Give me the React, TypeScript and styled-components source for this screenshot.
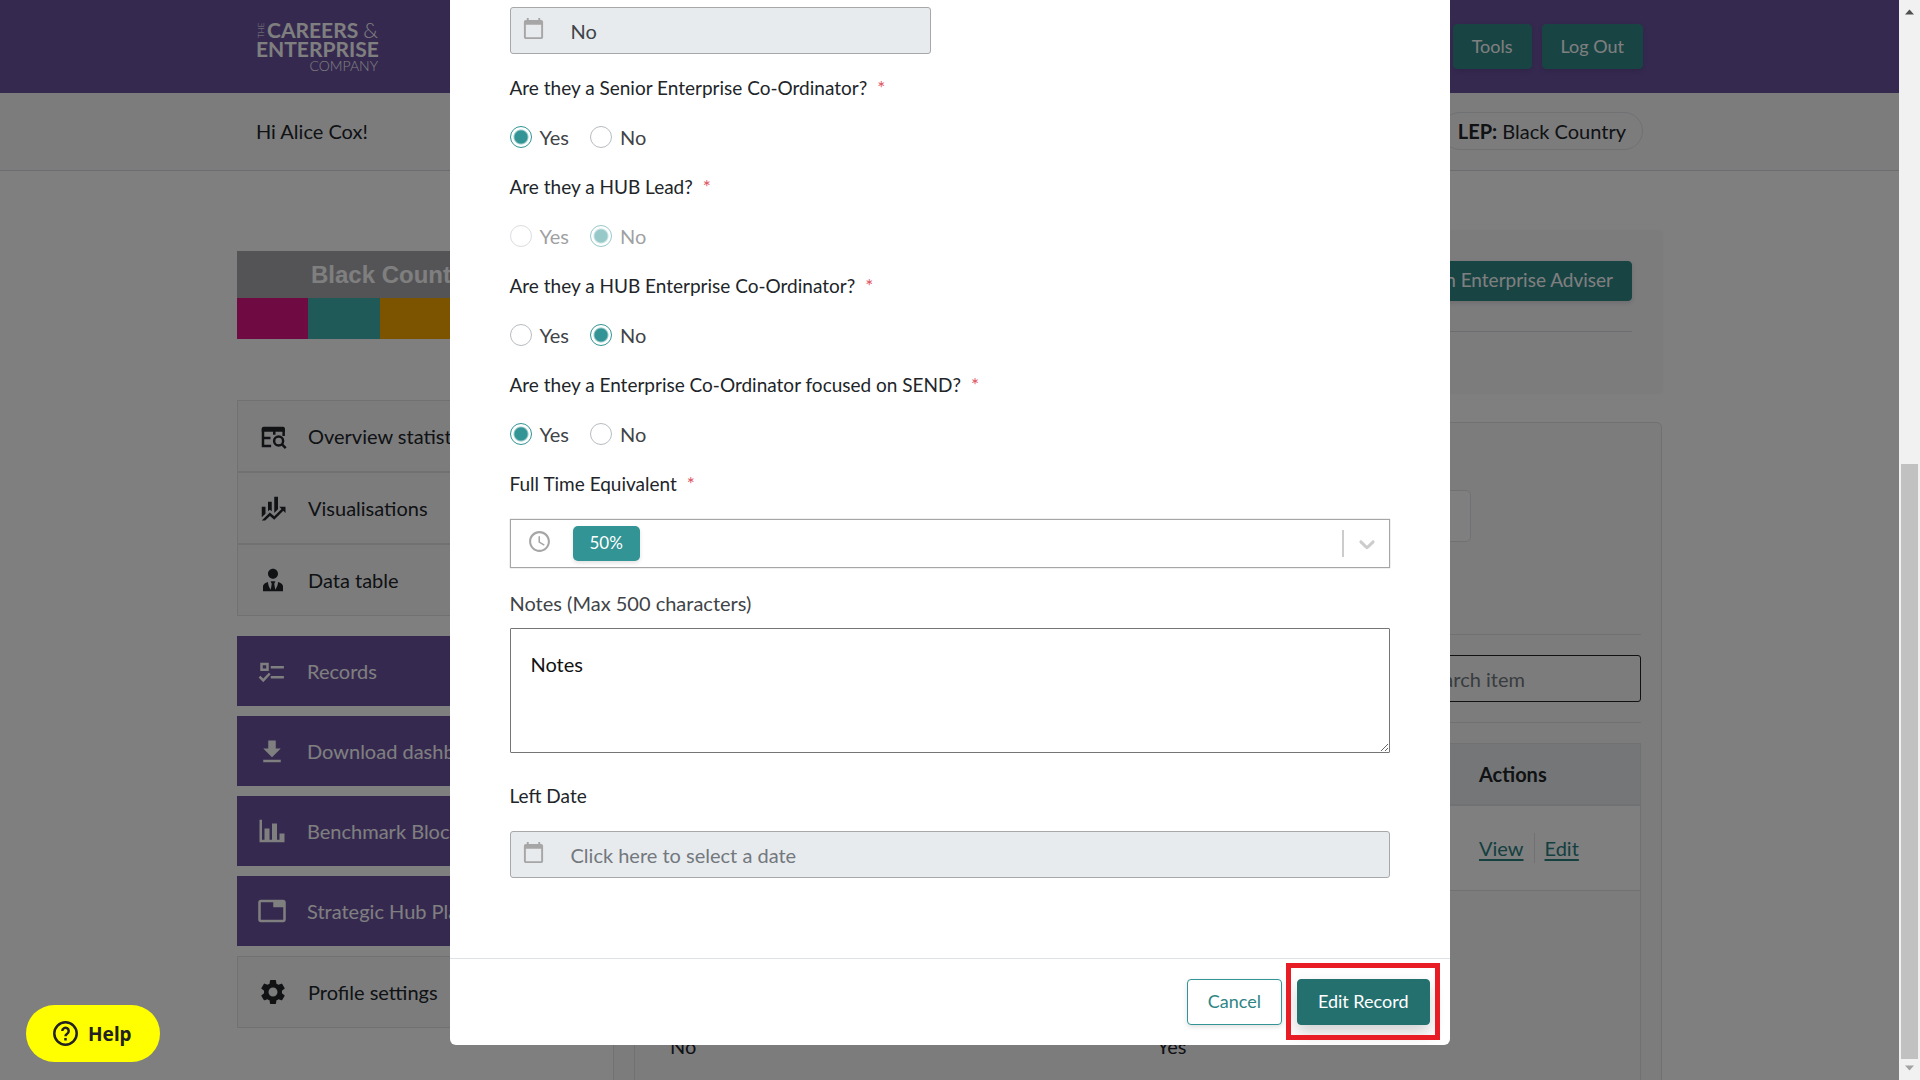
import React from "react";
import styled, { createGlobalStyle } from "styled-components";
import { MdCalendarToday, MdSchedule, MdSettings, MdTab } from "react-icons/md";

const color = {
  purple: "#6a52a0",
  teal: "#329494",
  tealDark: "#24706f",
  tealNav: "#308888",
  ink: "#212529",
  body: "#3f4448",
  muted: "#72787d",
  panel: "#f8f8fb",
  field: "#e8ebee",
  line: "#dee2e6",
};

const GlobalStyle = createGlobalStyle`
  *, *::before, *::after { box-sizing: border-box; }
  body { margin: 0; }
  body, button, input, select, textarea {
    font-family: Lato, "Liberation Sans", sans-serif;
    font-size: 20px;
    line-height: 24px;
    color: ${color.ink};
  }
`;

const Viewport = styled.div`
  display: grid;
  grid-template-columns: minmax(0, 1fr) 21px;
  height: 100vh;
  overflow: hidden;
`;

const Stage = styled.div`
  position: relative;
  overflow: hidden;
  background: #fff;
`;

/* Scrollbar */

const ScrollTrack = styled.div`
  display: flex;
  flex-direction: column;
  align-items: center;
  justify-content: space-between;
  padding: 9px 2px;
  background: #f1f1f1;
`;

const ScrollThumb = styled.div`
  width: 100%;
  height: 595px;
  margin: auto 0 6px;
  background: #c1c1c1;
`;

const ScrollArrow = styled.svg`
  width: 9px;
  height: 6px;
  flex: none;
`;

/* Site header */

const SiteHeader = styled.header`
  background: ${color.purple};
`;

const Container = styled.div`
  display: flex;
  align-items: center;
  justify-content: space-between;
  width: 100%;
  max-width: 1387px;
  margin: 0 auto;
`;

const HeaderInner = styled(Container)`
  height: 93px;
`;

const Logo = styled.svg`
  width: 124px;
  height: 56px;
  overflow: visible;
  font-family: Lato, sans-serif;
  fill: #fff;
`;

const HeaderNav = styled.nav`
  display: flex;
  gap: 10px;
`;

const Button = styled.button<{ $bg?: string; $height?: number; $pad?: number; $size?: number }>`
  height: ${(p) => p.$height ?? 46}px;
  padding: 0 ${(p) => p.$pad ?? 20}px 2px;
  border: 1px solid ${(p) => p.$bg ?? color.teal};
  border-radius: 4px;
  background: ${(p) => p.$bg ?? "#fff"};
  color: ${(p) => (p.$bg ? "#fff" : "#2e8484")};
  font-size: ${(p) => p.$size ?? 18}px;
  white-space: nowrap;
  box-shadow: 0 2px 5px rgba(0, 0, 0, 0.12);
`;

const GreetingBar = styled.div`
  border-bottom: 1px solid #d9dbe0;
  background: ${color.panel};
`;

const GreetingInner = styled(Container)`
  height: 77px;
  padding-bottom: 1px;
`;

const LepPill = styled.div`
  padding: 6px 16px;
  border: 1px solid ${color.line};
  border-radius: 19px;
`;

/* Page columns */

const Columns = styled.main`
  display: grid;
  grid-template-columns: 357px minmax(0, 1fr);
  gap: 19px;
  width: 100%;
  max-width: 1425px;
  margin: 0 auto;
  padding-top: 60px;
`;

const Sidebar = styled.aside`
  padding-top: 20px;
`;

const Banner = styled.div`
  height: 88px;
  margin-bottom: 61px;
  overflow: hidden;
  background: #a8a8ae;
`;

const BannerTitle = styled.div`
  height: 47px;
  padding: 11px 0 0 74px;
  color: #fff;
  font: bold 24px/26px "Liberation Sans", Arial, sans-serif;
`;

const BannerBlocks = styled.div`
  display: grid;
  grid-template-columns: repeat(5, 1fr);
  height: 41px;
`;

const BannerBlock = styled.span<{ $fill: string }>`
  background: ${(p) => p.$fill};
`;

const MenuGroup = styled.nav<{ $gap?: number }>`
  display: grid;
  gap: ${(p) => p.$gap ?? 0}px;
  margin-bottom: 20px;
`;

const MenuLink = styled.a<{ $solid?: boolean }>`
  display: flex;
  align-items: center;
  gap: 20px;
  height: ${(p) => (p.$solid ? 70 : 72)}px;
  padding: 0 20px;
  border: ${(p) => (p.$solid ? "none" : `1px solid ${color.line}`)};
  background: ${(p) => (p.$solid ? color.purple : color.panel)};
  color: ${(p) => (p.$solid ? "#fff" : color.ink)};
  text-decoration: none;
  white-space: nowrap;

  svg {
    width: 30px;
    height: 30px;
    flex: none;
  }
`;

const Content = styled.div`
  display: grid;
  align-content: start;
  gap: 29px;
`;

const ActionCard = styled.section`
  height: 162px;
  padding: 30px;
  border-radius: 4px;
  background: ${color.panel};
  box-shadow: 0 0 4px rgba(0, 0, 0, 0.06);
`;

const ActionRow = styled.div`
  display: flex;
  justify-content: flex-end;
  padding-bottom: 30px;
  border-bottom: 1px solid #d9dbe0;
`;

const RecordCard = styled.section`
  padding: 67px 20px 0;
  border: 1px solid ${color.line};
  border-radius: 5px;
  background: ${color.panel};
`;

const FilterBox = styled.div`
  width: 837px;
  height: 52px;
  border: 1px solid ${color.line};
  border-radius: 5px;
  background: #fff;
`;

const SearchRow = styled.div`
  display: flex;
  justify-content: flex-end;
  margin: 92px 0 20px;
  padding: 20px 0;
  border: solid ${color.line};
  border-width: 1px 0;
`;

const SearchInput = styled.input`
  width: 280px;
  height: 47px;
  padding: 0 20px 0 60px;
  border: 1px solid #222;
  border-radius: 3px;
  background: transparent;

  &::placeholder {
    color: ${color.muted};
    opacity: 1;
  }
`;

const Table = styled.table`
  width: 100%;
  height: 600px;
  border: 1px solid ${color.line};
  border-collapse: separate;
  border-spacing: 0;
  table-layout: fixed;
`;

const HeadCell = styled.th<{ $width?: number }>`
  width: ${(p) => (p.$width ? `${p.$width}px` : "auto")};
  height: 62px;
  padding: 0;
  border-bottom: 2px solid ${color.line};
  background: #e9ecef;
  text-align: left;
`;

const Cell = styled.td`
  height: 85px;
  padding: 0;
  border-bottom: 1px solid ${color.line};
  background: #fff;
`;

const RowLinks = styled.div`
  display: flex;
  align-items: center;

  a {
    color: #2a8080;
    text-underline-offset: 3px;
  }

  a + a {
    margin-left: 10px;
    padding: 3px 0 3px 10px;
    border-left: 1px solid ${color.line};
  }
`;

const DetailCell = styled.td`
  padding: 143px 0 0 35px;
  vertical-align: top;
`;

const DetailGrid = styled.div`
  display: grid;
  grid-template-columns: 1fr 1fr;
  gap: 4px;
`;

/* Dialog */

const Backdrop = styled.div`
  position: absolute;
  inset: 0;
  display: flex;
  align-items: flex-start;
  justify-content: center;
  background: rgba(0, 0, 0, 0.5);
`;

const Dialog = styled.form`
  width: 1000px;
  border-radius: 0 0 6px 6px;
  background: #fff;
`;

const DialogBody = styled.div`
  padding: 7px 60px 80px;
`;

const DateField = styled.div<{ $half?: boolean }>`
  display: flex;
  align-items: center;
  width: ${(p) => (p.$half ? "421px" : "100%")};
  height: 47px;
  border: 1px solid #a6a8aa;
  border-radius: 3px;
  background: ${color.field};

  svg {
    flex: none;
    width: 23px;
    height: 23px;
    margin: 0 26px 4px 11px;
    color: #a6a6a6;
  }
`;

const DateInput = styled.input`
  flex: 1;
  min-width: 0;
  height: 24px;
  padding: 0;
  border: 0;
  background: transparent;
  color: ${color.body};

  &::placeholder {
    color: ${color.muted};
    opacity: 1;
  }
`;

const Question = styled.fieldset`
  display: block;
  height: 77px;
  margin: 22px 0 0;
  padding: 0;
  border: 0;
`;

const questionText = `
  display: flex;
  gap: 10px;
  height: 24px;
  padding: 0;
  font-size: 19px;
`;

const Legend = styled.legend`
  ${questionText}
  margin-bottom: 25px;
`;

const FieldLabel = styled.label<{ $gap: number }>`
  ${questionText}
  margin-top: ${(p) => p.$gap}px;
  margin-bottom: 23px;
`;

const Required = styled.span`
  color: #e0525e;
`;

const Options = styled.div`
  display: flex;
  gap: 21px;
`;

const Option = styled.label<{ $disabled?: boolean }>`
  display: flex;
  align-items: center;
  gap: 8px;
  color: ${color.body};
  opacity: ${(p) => (p.$disabled ? 0.5 : 1)};
`;

const Radio = styled.input`
  appearance: none;
  width: 22px;
  height: 22px;
  margin: 0;
  border: 1px solid #b8bcc0;
  border-radius: 50%;
  background: #fff;

  &:checked {
    border-color: ${color.teal};
    background: radial-gradient(circle, ${color.teal} 6px, #fff 8px);
  }
`;

const SelectField = styled.div`
  display: flex;
  align-items: center;
  height: 49px;
  padding: 0 9px 0 16px;
  border: 1px solid #a6a6a6;
  box-shadow: 0 0 1px #a6a6a6;
`;

const ClockIcon = styled(MdSchedule)`
  width: 25px;
  height: 25px;
  margin: 0 21px 4px 0;
  color: #a6a6a6;
`;

const ChipSelect = styled.select`
  appearance: none;
  width: 67px;
  height: 35px;
  padding: 0 17px 1px;
  border: 0;
  border-radius: 5px;
  background: ${color.teal};
  color: #fff;
  font-size: 17px;
  box-shadow: 0 2px 4px rgba(0, 0, 0, 0.12);
`;

const Separator = styled.span`
  width: 2px;
  height: 27px;
  margin: 0 10px 0 auto;
  background: #ccc;
`;

const Chevron = styled.svg`
  width: 26px;
  height: 26px;
  fill: #ccc;
`;

const NotesLabel = styled.label`
  display: block;
  margin: 23px 0 13px;
  color: ${color.body};
`;

const Notes = styled.textarea`
  display: block;
  width: 100%;
  height: 125px;
  padding: 23px 20px;
  border: 1px solid #767676;
  border-radius: 1px;
  color: #111;
  resize: vertical;
`;

const DialogFooter = styled.footer`
  display: flex;
  justify-content: flex-end;
  gap: 15px;
  padding: 20px;
  border-top: 1px solid ${color.line};
`;

const Highlight = styled.div`
  position: relative;
  display: flex;

  &::after {
    content: "";
    position: absolute;
    inset: -16px -10px -15px -11px;
    border: 5px solid #e81c24;
    pointer-events: none;
  }
`;

const PrimaryButton = styled(Button)`
  box-shadow: 0 8px 16px rgba(0, 0, 0, 0.18);
`;

const HelpButton = styled.button`
  position: absolute;
  left: 26px;
  bottom: 18px;
  display: flex;
  align-items: center;
  gap: 10px;
  height: 57px;
  padding: 0 28px 0 27px;
  border: 0;
  border-radius: 29px;
  background: #ff0;
  color: #222;
  font: bold 19px/24px "Noto Sans", sans-serif;

  svg {
    width: 25px;
    height: 25px;
  }
`;

/* Icons */

const Glyph = ({ d }: { d: string }) => (
  <svg viewBox="0 0 24 24" fill="currentColor" aria-hidden="true">
    <path d={d} />
  </svg>
);

const TableSearchIcon = () => (
  <svg viewBox="0 0 24 24" fill="none" stroke="currentColor" strokeWidth="2" aria-hidden="true">
    <path d="M4 6v14h6.500M4 13.500h6M20.500 6v6M13 8v3" />
    <path d="M3 8.500V6a1.500 1.500 0 0 1 1.500-1.500h15.500A1.500 1.500 0 0 1 21.500 6v2.500z" fill="currentColor" stroke="none" />
    <circle cx="16.500" cy="16" r="3.600" />
    <path d="M19 18.500l3.200 3.200" />
  </svg>
);

const ChecklistIcon = () => (
  <svg viewBox="0 0 24 24" fill="none" stroke="currentColor" strokeWidth="2" aria-hidden="true">
    <path d="M3.600 6.400h4.800v4.600H3.600zM11 9h10.500M11 17h10.500" />
    <path d="M2 16.500l3 3L10.200 14" />
  </svg>
);

const ICONS = {
  finance:
    "M6,16.5L3,19.44V11H6M11,14.66L9.43,13.32L8,14.64V7H11M16,13L13,16V3H16M18.81,12.81L17,11H22V16L20.21,14.21L13,21.36L9.53,18.34L5.75,22H3L9.47,15.66L13,18.64",
  accountTie:
    "M12 3C14.21 3 16 4.79 16 7S14.21 11 12 11 8 9.21 8 7 9.79 3 12 3M16 13.54C16 14.6 15.72 17.07 13.81 19.83L13 15L13.94 13.12C13.32 13.05 12.67 13 12 13S10.68 13.05 10.06 13.12L11 15L10.19 19.83C8.28 17.07 8 14.6 8 13.54C5.61 14.24 4 15.5 4 17V21H20V17C20 15.5 18.4 14.24 16 13.54Z",
  download: "M5 21h14v-2H5v2zM19 10h-4V3.500H9V10H5l7 7 7-7z",
  bars: "M2 3h2v16h2v-9h4v9h2V6h4v13h2v-5h4v7H2z",
};

const overviewLinks = [
  { label: "Overview statistics", icon: <TableSearchIcon /> },
  { label: "Visualisations", icon: <Glyph d={ICONS.finance} /> },
  { label: "Data table", icon: <Glyph d={ICONS.accountTie} /> },
];

const toolLinks = [
  { label: "Records", icon: <ChecklistIcon /> },
  { label: "Download dashboard", icon: <Glyph d={ICONS.download} /> },
  { label: "Benchmark Blockers", icon: <Glyph d={ICONS.bars} /> },
  { label: "Strategic Hub Plan", icon: <MdTab /> },
];

const questions = [
  { id: "senior", text: "Are they a Senior Enterprise Co-Ordinator?", value: "Yes" },
  { id: "lead", text: "Are they a HUB Lead?", value: "No", disabled: true },
  { id: "hub", text: "Are they a HUB Enterprise Co-Ordinator?", value: "No" },
  { id: "send", text: "Are they a Enterprise Co-Ordinator focused on SEND?", value: "Yes" },
];

const blocks = ["#e01484", "#40b4b0", "#f8a800", "#6a52a0", "#8cc43c"];

export default function App() {
  return (
    <Viewport>
      <GlobalStyle />
      <Stage>
        <SiteHeader>
          <HeaderInner>
            <Logo viewBox="0 0 124 56" role="img" aria-label="The Careers & Enterprise Company">
              <text x="-19" y="8" fontSize="8" fontWeight="300" transform="rotate(-90)">THE</text>
              <text x="11" y="19" fontSize="21" fontWeight="700">CAREERS</text>
              <text x="122" y="19" fontSize="21" fontWeight="300" textAnchor="end">&amp;</text>
              <text x="0" y="38" fontSize="21" fontWeight="700">ENTERPRISE</text>
              <text x="122" y="52" fontSize="14" fontWeight="300" textAnchor="end">COMPANY</text>
            </Logo>
            <HeaderNav>
              <Button type="button" $bg={color.tealNav} $height={45} $pad={18}>Tools</Button>
              <Button type="button" $bg={color.tealNav} $height={45} $pad={18}>Log Out</Button>
            </HeaderNav>
          </HeaderInner>
        </SiteHeader>
        <GreetingBar>
          <GreetingInner>
            <span>Hi Alice Cox!</span>
            <LepPill><strong>LEP:</strong> Black Country</LepPill>
          </GreetingInner>
        </GreetingBar>

        <Columns>
          <Sidebar>
            <Banner>
              <BannerTitle>Black Country</BannerTitle>
              <BannerBlocks>
                {blocks.map((fill) => <BannerBlock key={fill} $fill={fill} />)}
              </BannerBlocks>
            </Banner>
            <MenuGroup>
              {overviewLinks.map(({ label, icon }) => (
                <MenuLink key={label} href="#">{icon}{label}</MenuLink>
              ))}
            </MenuGroup>
            <MenuGroup $gap={10}>
              {toolLinks.map(({ label, icon }) => (
                <MenuLink key={label} href="#" $solid>{icon}{label}</MenuLink>
              ))}
              <MenuLink href="#"><MdSettings />Profile settings</MenuLink>
            </MenuGroup>
          </Sidebar>

          <Content>
            <ActionCard>
              <ActionRow>
                <Button type="button" $bg={color.tealNav} $height={40} $pad={18} $size={19}>Add an Enterprise Adviser</Button>
              </ActionRow>
            </ActionCard>
            <RecordCard>
              <FilterBox />
              <SearchRow>
                <SearchInput type="search" aria-label="Search item" placeholder="Search item" />
              </SearchRow>
              <Table>
                <thead>
                  <tr>
                    <HeadCell />
                    <HeadCell $width={161} scope="col">Actions</HeadCell>
                  </tr>
                </thead>
                <tbody>
                  <tr>
                    <Cell />
                    <Cell>
                      <RowLinks>
                        <a href="#">View</a>
                        <a href="#">Edit</a>
                      </RowLinks>
                    </Cell>
                  </tr>
                  <tr>
                    <DetailCell colSpan={2}>
                      <DetailGrid>
                        <span>No</span>
                        <span>Yes</span>
                      </DetailGrid>
                    </DetailCell>
                  </tr>
                </tbody>
              </Table>
            </RecordCard>
          </Content>
        </Columns>

        <Backdrop>
          <Dialog role="dialog" aria-modal="true" aria-label="Edit Record" onSubmit={(e) => e.preventDefault()}>
            <DialogBody>
              <DateField $half>
                <MdCalendarToday />
                <DateInput aria-label="Date" defaultValue="No" readOnly />
              </DateField>

              {questions.map((q) => (
                <Question key={q.id} disabled={q.disabled}>
                  <Legend>{q.text}<Required>*</Required></Legend>
                  <Options>
                    {["Yes", "No"].map((value) => (
                      <Option key={value} $disabled={q.disabled}>
                        <Radio type="radio" name={q.id} value={value} defaultChecked={q.value === value} />
                        {value}
                      </Option>
                    ))}
                  </Options>
                </Question>
              ))}

              <FieldLabel htmlFor="fte" $gap={22}>Full Time Equivalent<Required>*</Required></FieldLabel>
              <SelectField>
                <ClockIcon />
                <ChipSelect id="fte" defaultValue="50%">
                  <option>50%</option>
                </ChipSelect>
                <Separator />
                <Chevron viewBox="0 0 20 20" aria-hidden="true">
                  <path d="M4.516 7.548c0.436-0.446 1.043-0.481 1.576 0l3.908 3.747 3.908-3.747c0.533-0.481 1.141-0.446 1.574 0 0.436 0.445 0.408 1.197 0 1.615-0.406 0.418-4.695 4.502-4.695 4.502-0.217 0.223-0.502 0.335-0.787 0.335s-0.570-0.112-0.789-0.335c0 0-4.287-4.084-4.695-4.502s-0.436-1.170 0-1.615z" />
                </Chevron>
              </SelectField>

              <NotesLabel htmlFor="notes">Notes (Max 500 characters)</NotesLabel>
              <Notes id="notes" defaultValue="Notes" />

              <FieldLabel htmlFor="left-date" $gap={31}>Left Date</FieldLabel>
              <DateField>
                <MdCalendarToday />
                <DateInput id="left-date" placeholder="Click here to select a date" readOnly />
              </DateField>
            </DialogBody>
            <DialogFooter>
              <Button type="button">Cancel</Button>
              <Highlight>
                <PrimaryButton type="submit" $bg={color.tealDark}>Edit Record</PrimaryButton>
              </Highlight>
            </DialogFooter>
          </Dialog>
        </Backdrop>

        <HelpButton type="button">
          <svg viewBox="0 0 25 25" fill="none" stroke="currentColor" strokeWidth="2.500" aria-hidden="true">
            <circle cx="12.500" cy="12.500" r="11.200" />
            <path d="M9.300 10a3.200 3.200 0 1 1 4.900 2.700c-1.100.7-1.700 1.200-1.700 2.500" />
            <path d="M12.500 17v2.500" />
          </svg>
          Help
        </HelpButton>
      </Stage>

      <ScrollTrack aria-hidden="true">
        <ScrollArrow viewBox="0 0 9 6"><path d="M0 5.500L4.500 0.500L9 5.500z" fill="#505050" /></ScrollArrow>
        <ScrollThumb />
        <ScrollArrow viewBox="0 0 9 6"><path d="M0 0.500h9L4.500 5.500z" fill="#a3a3a3" /></ScrollArrow>
      </ScrollTrack>
    </Viewport>
  );
}
